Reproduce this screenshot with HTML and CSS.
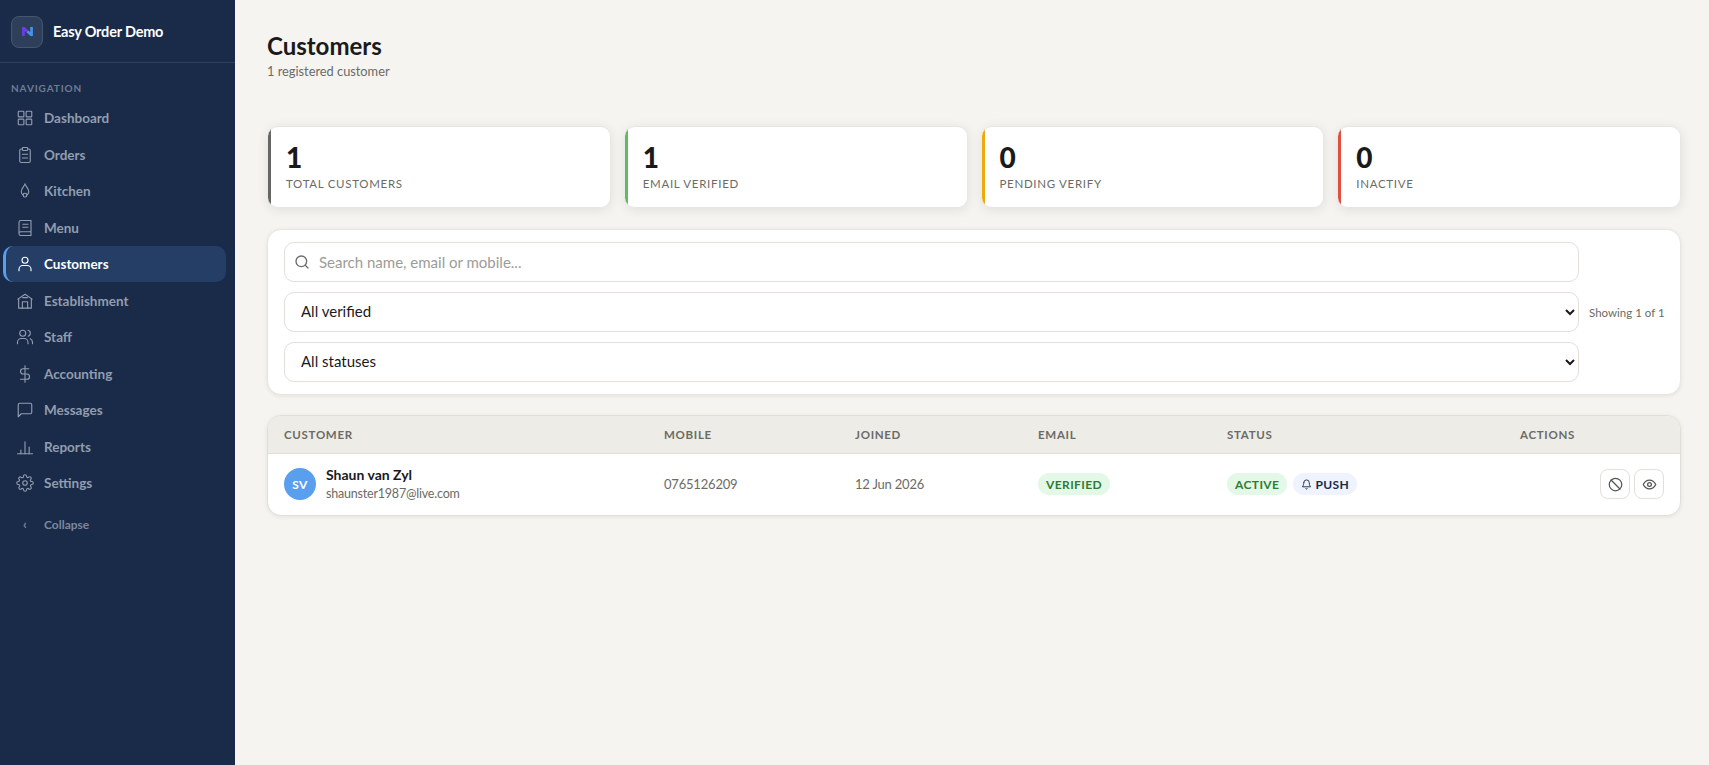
FILE: index.html
```html
<!DOCTYPE html>
<html lang="en">
<head>
<meta charset="utf-8">
<title>Customers</title>
<link rel="stylesheet" href="styles.css">
</head>
<body>
<div class="app">
  <aside class="sidebar">
    <div class="brand">
      <div class="logo">
        <svg width="11" height="9" viewBox="0 0 12 10"><path d="M1.500 10V1l5 4.500" fill="none" stroke="#6a3df0" stroke-width="3"/><path d="M6 5l4.500 4V0" fill="none" stroke="#4a90e8" stroke-width="3"/></svg>
      </div>
      <span class="brand-name">Easy Order Demo</span>
    </div>
    <div class="nav-label">NAVIGATION</div>
    <nav class="nav">
      <a class="nav-item"><svg class="ico" viewBox="0 0 24 24"><rect x="3" y="3" width="7.500" height="7.500" rx="1"/><rect x="13.500" y="3" width="7.500" height="7.500" rx="1"/><rect x="3" y="13.500" width="7.500" height="7.500" rx="1"/><rect x="13.500" y="13.500" width="7.500" height="7.500" rx="1"/></svg>Dashboard</a>
      <a class="nav-item"><svg class="ico" viewBox="0 0 24 24"><rect x="8.500" y="2" width="7" height="4" rx="1"/><path d="M15.500 4H17a2 2 0 0 1 2 2v14a2 2 0 0 1-2 2H7a2 2 0 0 1-2-2V6a2 2 0 0 1 2-2h1.500"/><path d="M8.500 11h7M8.500 16h7"/></svg>Orders</a>
      <a class="nav-item"><svg class="ico" viewBox="0 0 24 24"><path d="M12 2.500c1 3.500 5 6 5 10.500a5 5 0 0 1-3 4.600M12 2.500C11 6 7 8.500 7 13a5 5 0 0 0 3 4.600"/><circle cx="12" cy="17.500" r="2.500"/></svg>Kitchen</a>
      <a class="nav-item"><svg class="ico" viewBox="0 0 24 24"><path d="M4 18.500V4.500A2.500 2.500 0 0 1 6.500 2H20v15H6.500A2.500 2.500 0 0 0 4 19.500 2.500 2.500 0 0 0 6.500 22H20v-5"/><path d="M9 7h7M9 11h7"/></svg>Menu</a>
      <a class="nav-item active"><svg class="ico" viewBox="0 0 24 24"><circle cx="12" cy="7" r="4"/><path d="M4 21v-2a5 5 0 0 1 5-5h6a5 5 0 0 1 5 5v2"/></svg>Customers</a>
      <a class="nav-item"><svg class="ico" viewBox="0 0 24 24"><path d="M2.500 9.500L12 3l9.500 6.500"/><path d="M3.500 9v12.500h17V9"/><path d="M8.500 21.500V13h7v8.500"/><path d="M9 7.500h6"/></svg>Establishment</a>
      <a class="nav-item"><svg class="ico" viewBox="0 0 24 24"><circle cx="9" cy="7" r="4"/><path d="M2 21v-2a5 5 0 0 1 5-5h4a5 5 0 0 1 5 5v2"/><path d="M16 3.100a4 4 0 0 1 0 7.800"/><path d="M19 14.200a5 5 0 0 1 3 4.800v2"/></svg>Staff</a>
      <a class="nav-item"><svg class="ico" viewBox="0 0 24 24"><path d="M12 1v22"/><path d="M17 5H9.500a3.500 3.500 0 0 0 0 7h5a3.500 3.500 0 0 1 0 7H6"/></svg>Accounting</a>
      <a class="nav-item"><svg class="ico" viewBox="0 0 24 24"><path d="M21 15a2 2 0 0 1-2 2H7l-4 4V5a2 2 0 0 1 2-2h14a2 2 0 0 1 2 2z"/></svg>Messages</a>
      <a class="nav-item"><svg class="ico" viewBox="0 0 24 24"><path d="M2 21h20"/><path d="M6.500 21v-5M12 21V5M17.500 21v-9"/></svg>Reports</a>
      <a class="nav-item"><svg class="ico" viewBox="0 0 24 24"><circle cx="12" cy="12" r="3"/><path d="M19.400 15a1.650 1.650 0 0 0 .33 1.820l.06.06a2 2 0 1 1-2.830 2.830l-.06-.06a1.650 1.650 0 0 0-2.820 1.170V21a2 2 0 0 1-4 0v-.09A1.650 1.650 0 0 0 7.270 19.700l-.06.06a2 2 0 1 1-2.830-2.830l.06-.06A1.650 1.650 0 0 0 3.270 14H3a2 2 0 0 1 0-4h.09A1.650 1.650 0 0 0 4.300 7.270l-.06-.06a2 2 0 1 1 2.830-2.830l.06.06A1.650 1.650 0 0 0 10 3.270V3a2 2 0 0 1 4 0v.09a1.650 1.650 0 0 0 2.820 1.170l.06-.06a2 2 0 1 1 2.830 2.830l-.06.06A1.650 1.650 0 0 0 20.730 10H21a2 2 0 0 1 0 4h-.09a1.650 1.650 0 0 0-1.510 1z"/></svg>Settings</a>
    </nav>
    <a class="collapse"><span class="collapse-ico">‹</span>Collapse</a>
  </aside>
  <main class="main">
    <header class="page-head">
      <h1>Customers</h1>
      <p>1 registered customer</p>
    </header>
    <section class="stats">
      <div class="stat s-dark"><div class="num">1</div><div class="lbl">TOTAL CUSTOMERS</div></div>
      <div class="stat s-green"><div class="num">1</div><div class="lbl">EMAIL VERIFIED</div></div>
      <div class="stat s-amber"><div class="num">0</div><div class="lbl">PENDING VERIFY</div></div>
      <div class="stat s-red"><div class="num">0</div><div class="lbl">INACTIVE</div></div>
    </section>
    <section class="filters">
      <div class="filter-fields">
        <div class="search">
          <svg class="search-ico" viewBox="0 0 24 24"><circle cx="11" cy="11" r="8"/><path d="M21 21l-4.300-4.300"/></svg>
          <input type="text" placeholder="Search name, email or mobile...">
        </div>
        <select><option>All verified</option></select>
        <select><option>All statuses</option></select>
      </div>
      <span class="showing">Showing 1 of 1</span>
    </section>
    <section class="table-card">
      <table>
        <thead>
          <tr>
            <th class="c-cust">CUSTOMER</th>
            <th class="c-mob">MOBILE</th>
            <th class="c-join">JOINED</th>
            <th class="c-mail">EMAIL</th>
            <th class="c-stat">STATUS</th>
            <th class="c-act">ACTIONS</th>
          </tr>
        </thead>
        <tbody>
          <tr>
            <td>
              <div class="person">
                <span class="avatar">SV</span>
                <div><div class="pname">Shaun van Zyl</div><div class="pmail">shaunster1987@live.com</div></div>
              </div>
            </td>
            <td class="muted">0765126209</td>
            <td class="muted">12 Jun 2026</td>
            <td><span class="badge green">VERIFIED</span></td>
            <td>
              <div class="badges">
                <span class="badge green">ACTIVE</span>
                <span class="badge blue"><svg class="bell" viewBox="0 0 24 24"><path d="M6 8a6 6 0 0 1 12 0c0 7 3 9 3 9H3s3-2 3-9"/><path d="M10.300 21a1.940 1.940 0 0 0 3.400 0"/></svg>PUSH</span>
              </div>
            </td>
            <td>
              <div class="actions">
                <button class="icon-btn"><svg viewBox="0 0 24 24"><circle cx="12" cy="12" r="10"/><path d="M4.900 4.900l14.200 14.200"/></svg></button>
                <button class="icon-btn"><svg viewBox="0 0 24 24"><path d="M2 12s3.500-7 10-7 10 7 10 7-3.500 7-10 7-10-7-10-7z"/><circle cx="12" cy="12" r="3"/></svg></button>
              </div>
            </td>
          </tr>
        </tbody>
      </table>
    </section>
  </main>
</div>
</body>
</html>
```

FILE: styles.css
```css
* { box-sizing: border-box; }
html, body { margin: 0; height: 100%; }
body { font-family: "Lato", "Open Sans", sans-serif; background: #f5f4f0; color: #1a1a1a; overflow: hidden; }
.app { display: flex; height: 765px; }
.sidebar { width: 235px; flex: none; background: #1a2b4a; display: flex; flex-direction: column; }
.brand { height: 63px; display: flex; align-items: center; gap: 10px; padding: 0 11px 0; border-bottom: 1px solid rgba(255,255,255,.1); }
.logo { width: 32px; height: 32px; margin-top: 1px; border-radius: 8px; background: #2e3f5c; border: 1px solid #47566f; display: flex; align-items: center; justify-content: center; }
.brand-name { color: #fff; font-weight: 700; font-size: 14.500px; letter-spacing: -.2px; }
.nav-label { color: #6f7c92; font-size: 10px; font-weight: 700; letter-spacing: .9px; padding: 19px 11px 0; height: 37.250px; line-height: 12px; }
.nav { display: flex; flex-direction: column; gap: .5px; }
.nav-item { height: 36px; margin-left: 3px; width: 223px; padding-left: 13px; display: flex; align-items: center; gap: 10px; color: #929dae; font-size: 13.500px; font-weight: 700; border-radius: 10px; }
.nav-item.active { background: #253e66; color: #fff; font-weight: 700; border-left: 3px solid #5a9fee; padding-left: 10px; }
.ico { width: 18px; height: 18px; flex: none; fill: none; stroke: currentColor; stroke-width: 1.500; stroke-linecap: round; stroke-linejoin: round; }
.collapse { margin-top: 15px; padding-left: 23px; display: flex; align-items: center; height: 16px; color: #7a879c; font-size: 12px; font-weight: 700; }
.collapse-ico { width: 21px; font-size: 13px; }
.main { flex: 1; padding: 31px 28px 0 32px; min-width: 0; }
.page-head { height: 95px; }
h1 { margin: 0; font-size: 24px; line-height: 30px; font-weight: 700; color: #1a1a1a; }
.page-head p { margin: 2px 0 0; font-size: 12.800px; line-height: 16px; color: #6b6b66; }
.stats { display: grid; grid-template-columns: repeat(4, 1fr); gap: 14px; margin: 0 0 21px 1px; }
.stat { height: 82px; background: linear-gradient(to right, var(--accent) 3px, #fff 3px); background-origin: border-box; border-radius: 10px; padding: 14px 16px 0 18px; border: 1px solid #e8e6e0; border-left: 0; box-shadow: 0 2px 12px rgba(0,0,0,.09); }
.s-dark { --accent: #666; }
.s-green { --accent: #5bbd5b; }
.s-amber { --accent: #eeaa0c; }
.s-red { --accent: #e05040; }
.num { font-size: 28px; font-weight: 900; line-height: 32px; color: #1a1a1a; }
.lbl { margin-top: 4px; font-size: 11.500px; line-height: 14px; color: #6b6b66; letter-spacing: .7px; font-weight: 400; }
.filters { display: flex; align-items: center; gap: 10px; background: #fff; border-radius: 14px; border: 1px solid #e8e6e0; padding: 12px 16px; margin-bottom: 20px; box-shadow: 0 1px 4px rgba(0,0,0,.08); }
.filter-fields { flex: 1; display: flex; flex-direction: column; gap: 10px; min-width: 0; }
.search { position: relative; }
.search-ico { position: absolute; left: 10px; top: 12px; width: 16px; height: 16px; fill: none; stroke: #6b6b66; stroke-width: 2; stroke-linecap: round; }
input, select { display: block; width: 100%; height: 40px; font-family: inherit; font-size: 15px; border: 1px solid #e2dfd8; border-radius: 10px; background: #fff; color: #1a1a1a; outline: none; }
input { padding: 0 12px 0 34px; }
input::placeholder { color: #9c9c97; }
select { padding: 0 12px 2px; }
.showing { flex: none; width: 75px; font-size: 11.500px; color: #6b6b66; white-space: nowrap; }
.table-card { background: #fff; border-radius: 14px; border: 1px solid #e2dfd8; overflow: hidden; box-shadow: 0 1px 4px rgba(0,0,0,.08); }
table { width: 100%; border-collapse: collapse; table-layout: fixed; }
th { height: 37px; padding: 0 16px; background: #eeece7; text-align: left; font-size: 11.500px; font-weight: 700; letter-spacing: .7px; color: #6b6b66; border-bottom: 1px solid #e2dfd8; }
.c-cust { width: 380px; }
.c-mob { width: 191px; }
.c-join { width: 183px; }
.c-mail { width: 189px; }
.c-stat { width: 293px; }
td { height: 62px; padding: 0 16px; font-size: 13px; letter-spacing: -.2px; }
.muted { color: #6b6b66; }
.person { display: flex; align-items: center; gap: 10px; }
.avatar { width: 32px; height: 32px; flex: none; border-radius: 50%; background: #5a9fee; color: #fff; font-size: 12px; font-weight: 700; letter-spacing: .5px; display: flex; align-items: center; justify-content: center; }
.pname { font-size: 14px; font-weight: 700; color: #1a1a1a; line-height: 17px; margin-bottom: 2px; letter-spacing: 0; }
.pmail { font-size: 12.500px; color: #6b6b66; line-height: 18px; }
.badges { display: flex; gap: 6px; }
.badge { display: inline-flex; align-items: center; height: 22px; padding: 0 8px; border-radius: 11px; font-size: 12px; font-weight: 700; letter-spacing: .4px; }
.green { background: #e3f8e6; color: #2e7d32; }
.blue { background: #eef3fd; color: #1a2b4a; gap: 3px; }
.bell { width: 11px; height: 11px; fill: none; stroke: #1a2b4a; stroke-width: 2; stroke-linecap: round; stroke-linejoin: round; }
.actions { display: flex; justify-content: flex-end; gap: 4px; }
.icon-btn { width: 30px; height: 30px; padding: 0; display: flex; align-items: center; justify-content: center; background: #fff; border: 1px solid #e2dfd8; border-radius: 8px; color: #555; }
.icon-btn svg { width: 15px; height: 15px; fill: none; stroke: currentColor; stroke-width: 2; stroke-linecap: round; stroke-linejoin: round; }
```
